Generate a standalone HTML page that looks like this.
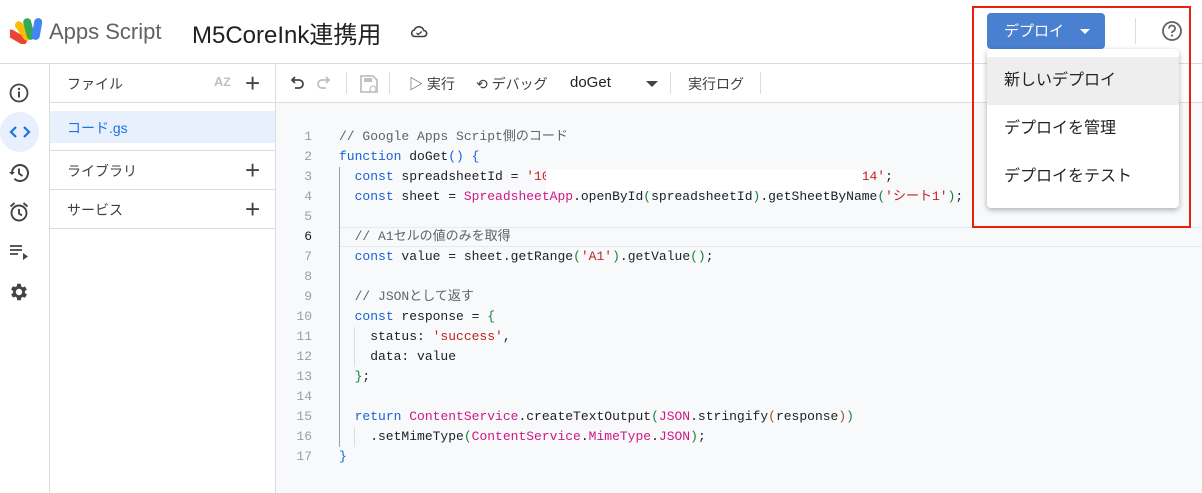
<!DOCTYPE html>
<html><head><meta charset="utf-8"><style>
*{margin:0;padding:0;box-sizing:border-box}
body{width:1202px;height:493px;overflow:hidden;background:#fff;font-family:"Liberation Sans","Noto Sans CJK JP",sans-serif;color:#3c4043;position:relative}
.a{position:absolute}
.code{position:absolute;left:276px;top:103px;width:926px;height:390px;background:#f8f9fa}
.ln{position:absolute;left:276px;width:36px;text-align:right;font:13px "Liberation Mono","Noto Sans CJK JP",monospace;color:#9aa0a6;line-height:20px}
.cl{position:absolute;left:339px;font:13px "Liberation Mono","Noto Sans CJK JP",monospace;color:#202124;line-height:20px;white-space:pre}
.k{color:#1a62d6}.p{color:#d01884}.s{color:#c5221f}.c{color:#5f6368}.g{color:#188038}.b{color:#a0522d}
.gd{position:absolute;width:1px;background:#9aa0a6}
.side{font-size:14px;color:#3c4043}
.plus{position:absolute;font-size:26px;font-weight:300;color:#444;line-height:20px}
</style></head><body>
<svg class="a" style="left:10px;top:16px" width="34" height="28" viewBox="0 0 34 28">
<rect x="3" y="10" width="8" height="22" rx="4" fill="#ea4335" transform="rotate(-60 7 21)"/>
<rect x="9" y="4" width="8" height="22" rx="4" fill="#fbbc04" transform="rotate(-35 13 15)"/>
<rect x="15" y="2" width="8" height="22" rx="4" fill="#34a853" transform="rotate(-15 19 13)"/>
<rect x="23" y="2" width="8" height="22" rx="4" fill="#4285f4" transform="rotate(10 27 13)"/>
</svg>
<div class="a" style="left:49px;top:19px;font-size:22px;color:#5f6368">Apps Script</div>
<div class="a" style="left:192px;top:15px;font-size:24px;color:#202124">M5CoreInk連携用</div>
<svg class="a" style="left:410px;top:24px" width="18" height="14" viewBox="0 0 18 14"><path d="M4.5 12.5h9a3 3 0 0 0 .3-6A5 5 0 0 0 4.3 6a3.3 3.3 0 0 0 .2 6.5z" fill="none" stroke="#3c4043" stroke-width="1.6"/><path d="M6.5 9l1.8 1.5 3.5-3" fill="none" stroke="#3c4043" stroke-width="1.4"/></svg>
<div class="a" style="left:987px;top:13px;width:118px;height:36px;background:#4a80d0;border-radius:4px;color:#fff;font-size:15px;line-height:37px;padding-left:17px">デプロイ<span style="position:absolute;left:93px;top:16px;border-left:5px solid transparent;border-right:5px solid transparent;border-top:5px solid #fff"></span></div>
<div class="a" style="left:1135px;top:18px;width:1px;height:26px;background:#dadce0"></div>
<svg class="a" style="left:1161px;top:20px" width="22" height="22" viewBox="0 0 22 22"><circle cx="11" cy="11" r="9" fill="none" stroke="#5f6368" stroke-width="1.8"/><path d="M8 8.5a3 3 0 1 1 4 2.8c-.8.4-1 .9-1 1.7" fill="none" stroke="#5f6368" stroke-width="1.8"/><circle cx="11" cy="15.5" r="1.1" fill="#5f6368"/></svg>
<div class="a" style="left:0;top:63px;width:1202px;height:1px;background:#dadce0"></div>
<div class="a" style="left:49px;top:64px;width:1px;height:429px;background:#dadce0"></div>
<svg class="a" style="left:8px;top:82px" width="22" height="22" viewBox="0 0 22 22"><circle cx="11" cy="11" r="8.5" fill="none" stroke="#444" stroke-width="1.8"/><rect x="10" y="9.5" width="2" height="6" fill="#444"/><circle cx="11" cy="7" r="1.2" fill="#444"/></svg>
<div class="a" style="left:0;top:112px;width:39px;height:40px;border-radius:20px;background:#e8f0fe"></div>
<svg class="a" style="left:9px;top:124px" width="22" height="16" viewBox="0 0 22 16"><path d="M7 3L2 8l5 5M15 3l5 5-5 5" fill="none" stroke="#1a73e8" stroke-width="2.2"/></svg>
<svg class="a" style="left:8px;top:162px" width="22" height="22" viewBox="0 0 22 22"><path d="M4 11a8 8 0 1 1 2.4 5.7" fill="none" stroke="#444" stroke-width="2"/><path d="M1 10h6l-3 3z" fill="#444"/><path d="M11 6.5v5l3.5 2.5" fill="none" stroke="#444" stroke-width="1.9"/></svg>
<svg class="a" style="left:8px;top:201px" width="22" height="22" viewBox="0 0 22 22"><circle cx="11" cy="12" r="7.5" fill="none" stroke="#444" stroke-width="1.9"/><path d="M11 8v4.5l3 2M2.5 5.5l4-3.5M19.5 5.5l-4-3.5" fill="none" stroke="#444" stroke-width="1.9"/></svg>
<svg class="a" style="left:8px;top:242px" width="22" height="20" viewBox="0 0 22 20"><path d="M2 4h12M2 8h12M2 12h8" stroke="#444" stroke-width="1.8"/><path d="M15 11l5 3.5-5 3.5z" fill="#444"/></svg>
<svg class="a" style="left:8px;top:281px" width="22" height="22" viewBox="0 0 24 24"><path fill="#444" d="M19.4 13a7.5 7.5 0 0 0 0-2l2.1-1.6-2-3.5-2.5 1a7 7 0 0 0-1.7-1L15 3h-4l-.4 2.7a7 7 0 0 0-1.7 1l-2.5-1-2 3.5L6.6 11a7.5 7.5 0 0 0 0 2l-2.1 1.6 2 3.5 2.5-1a7 7 0 0 0 1.7 1L11 21h4l.4-2.7a7 7 0 0 0 1.7-1l2.5 1 2-3.5zM13 15.5a3.5 3.5 0 1 1 0-7 3.5 3.5 0 0 1 0 7z" transform="translate(-1 0)"/></svg>
<div class="a" style="left:275px;top:64px;width:1px;height:429px;background:#dadce0"></div>
<div class="a side" style="left:67px;top:74px">ファイル</div>
<div class="a" style="left:214px;top:74px;font-size:13px;font-weight:bold;color:#bdc1c6">A<span style="font-size:12px">Z</span></div>
<div class="plus" style="left:245px;top:73px">+</div>
<div class="a" style="left:50px;top:102px;width:225px;height:1px;background:#dadce0"></div>
<div class="a" style="left:50px;top:111px;width:225px;height:32px;background:#e8f0fe"></div>
<div class="a" style="left:67px;top:118px;font-size:14px;color:#1a73e8">コード.gs</div>
<div class="a" style="left:50px;top:150px;width:225px;height:1px;background:#dadce0"></div>
<div class="a side" style="left:67px;top:161px">ライブラリ</div>
<div class="plus" style="left:245px;top:160px">+</div>
<div class="a" style="left:50px;top:189px;width:225px;height:1px;background:#dadce0"></div>
<div class="a side" style="left:67px;top:200px">サービス</div>
<div class="plus" style="left:245px;top:199px">+</div>
<div class="a" style="left:50px;top:228px;width:225px;height:1px;background:#dadce0"></div>
<svg class="a" style="left:289px;top:76px" width="16" height="14" viewBox="0 0 16 14"><path d="M4 4h6a4 4 0 0 1 0 8H6M6 1L3 4l3 3" fill="none" stroke="#444" stroke-width="1.8"/></svg>
<svg class="a" style="left:316px;top:76px" width="16" height="14" viewBox="0 0 16 14"><path d="M12 4H6a4 4 0 0 0 0 8h4M10 1l3 3-3 3" fill="none" stroke="#bdc1c6" stroke-width="1.8"/></svg>
<div class="a" style="left:346px;top:72px;width:1px;height:22px;background:#dadce0"></div>
<svg class="a" style="left:358px;top:73px" width="22" height="22" viewBox="0 0 22 22"><path d="M3 3h12l4 4v12H3z" fill="none" stroke="#bdc1c6" stroke-width="1.8"/><rect x="6" y="5" width="8" height="4" fill="#bdc1c6"/><circle cx="15" cy="16" r="3" fill="#fff" stroke="#bdc1c6" stroke-width="1.2"/></svg>
<div class="a" style="left:389px;top:72px;width:1px;height:22px;background:#dadce0"></div>
<div class="a" style="left:409px;top:74px;font-size:14px;color:#3c4043">▷ 実行</div>
<div class="a" style="left:476px;top:74px;font-size:14px;color:#3c4043">⟲ デバッグ</div>
<div class="a" style="left:570px;top:74px;font-size:15px;color:#202124">doGet</div>
<div class="a" style="left:646px;top:81px;border-left:6px solid transparent;border-right:6px solid transparent;border-top:6px solid #444"></div>
<div class="a" style="left:670px;top:72px;width:1px;height:22px;background:#dadce0"></div>
<div class="a" style="left:688px;top:74px;font-size:14px;color:#3c4043">実行ログ</div>
<div class="a" style="left:760px;top:72px;width:1px;height:22px;background:#dadce0"></div>
<div class="a" style="left:276px;top:102px;width:926px;height:1px;background:#dadce0"></div>
<div class="code"></div>
<div class="a" style="left:339px;top:227px;width:863px;height:20px;border-top:1px solid #e8eaed;border-bottom:1px solid #e8eaed"></div>
<div class="gd" style="left:339px;top:167px;height:280px"></div>
<div class="gd" style="left:354px;top:327px;height:40px;background:#dadce0"></div>
<div class="gd" style="left:354px;top:427px;height:20px;background:#dadce0"></div>
<div class="ln" style="top:127px">1<br>2<br>3<br>4<br>5<br><span style="color:#202124">6</span><br>7<br>8<br>9<br>10<br>11<br>12<br>13<br>14<br>15<br>16<br>17</div>
<div class="cl" style="top:127px"><span class="c">// Google Apps Script側のコード</span>
<span class="k">function</span> doGet<span class="k">()</span> <span class="k">{</span>
  <span class="k">const</span> spreadsheetId = <span class="s">'10                                        14'</span>;
  <span class="k">const</span> sheet = <span class="p">SpreadsheetApp</span>.openById<span class="g">(</span>spreadsheetId<span class="g">)</span>.getSheetByName<span class="g">(</span><span class="s">'シート1'</span><span class="g">)</span>;

  <span class="c">// A1セルの値のみを取得</span>
  <span class="k">const</span> value = sheet.getRange<span class="g">(</span><span class="s">'A1'</span><span class="g">)</span>.getValue<span class="g">()</span>;

  <span class="c">// JSONとして返す</span>
  <span class="k">const</span> response = <span class="g">{</span>
    status: <span class="s">'success'</span>,
    data: value
  <span class="g">}</span>;

  <span class="k">return</span> <span class="p">ContentService</span>.createTextOutput<span class="g">(</span><span class="p">JSON</span>.stringify<span class="b">(</span>response<span class="b">)</span><span class="g">)</span>
    .setMimeType<span class="g">(</span><span class="p">ContentService</span>.<span class="p">MimeType</span>.<span class="p">JSON</span><span class="g">)</span>;
<span class="k">}</span></div>
<div class="a" style="left:546px;top:169px;width:317px;height:22px;background:#fff"></div>
<div class="a" style="left:987px;top:49px;width:192px;height:159px;background:#fff;border-radius:4px;box-shadow:0 2px 6px rgba(0,0,0,.3)"></div>
<div class="a" style="left:987px;top:57px;width:192px;height:48px;background:#eeeeee"></div>
<div class="a" style="left:1004px;top:66px;font-size:16px;color:#202124">新しいデプロイ</div>
<div class="a" style="left:1004px;top:114px;font-size:16px;color:#202124">デプロイを管理</div>
<div class="a" style="left:1004px;top:162px;font-size:16px;color:#202124">デプロイをテスト</div>
<div class="a" style="left:972px;top:6px;width:219px;height:222px;border:2px solid #e8200c"></div>
</body></html>
